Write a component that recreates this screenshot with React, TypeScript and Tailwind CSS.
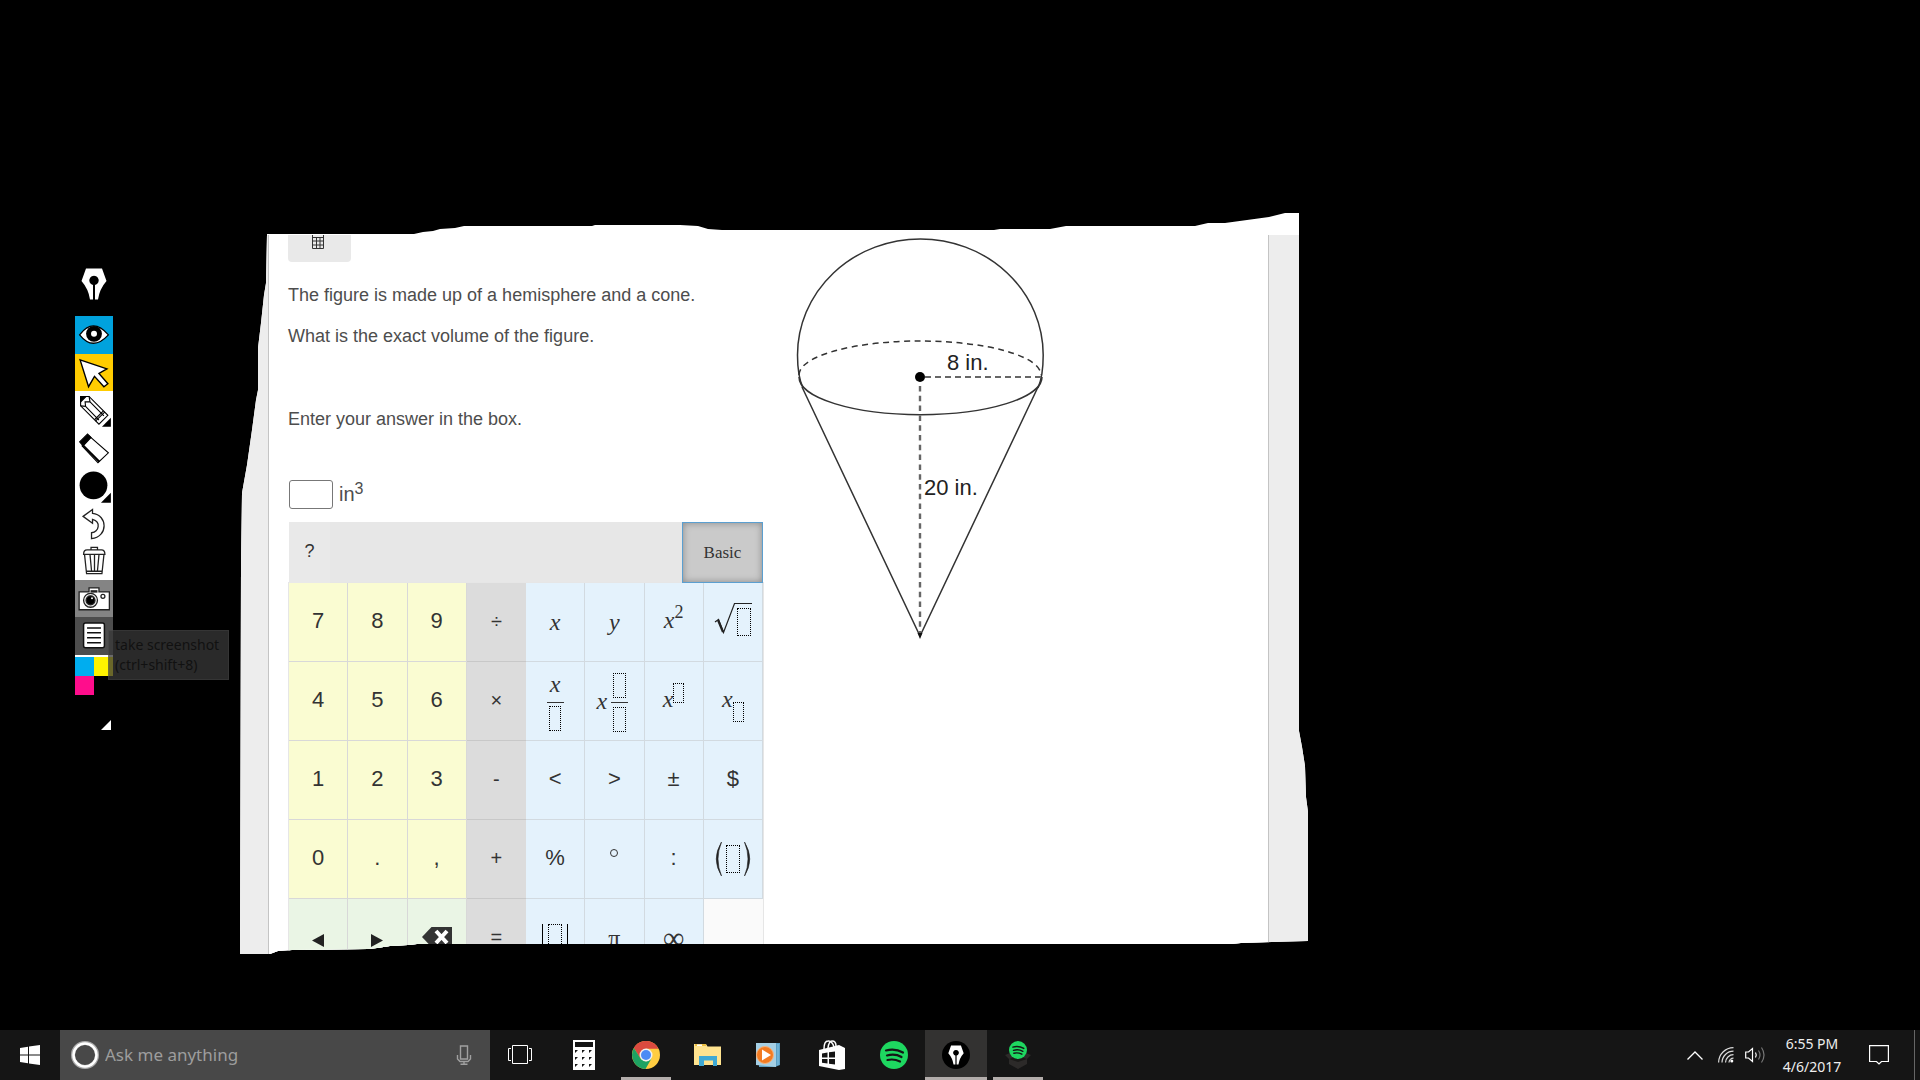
import React from "react";
import type { ReactNode } from "react";

const sans = "font-['Liberation_Sans',Arial,sans-serif]";
const uiFont = "font-['Noto_Sans','Open_Sans',sans-serif]";

/* ---------- Drawing toolbar ---------- */

function Nib({ className }: { className: string }) {
  return (
    <svg viewBox="0 0 26 32" className={className} aria-hidden="true">
      <path d="M5 0.5H21L25.5 13Q18.500 21 17 31.500H14V17A4.700 4.700 0 1 0 12 17V31.500H9Q7.500 21 0.500 13Z" fill="#fff" />
    </svg>
  );
}

const box = { width: 38, height: 38, viewBox: "0 0 38 38", className: "h-full w-full", "aria-hidden": true } as const;

const tools: { name: string; bg: string; icon: ReactNode }[] = [
  {
    name: "Show or hide ink",
    bg: "bg-[#00a2dd]",
    icon: (
      <svg {...box}>
        <path d="M4.500 19Q18 1 33.500 19Q18 36 4.500 19Z" fill="#fff" stroke="#000" strokeWidth="1.300" />
        <circle cx="19" cy="18" r="8" fill="#000" />
        <circle cx="19" cy="18" r="3" fill="#fff" />
      </svg>
    ),
  },
  {
    name: "Cursor",
    bg: "bg-[#ffcc00]",
    icon: (
      <svg {...box}>
        <path d="M5 6L32 15L24 19.500L33 30L29 33L19.500 22.500L13.500 33Z" fill="#fff" stroke="#000" strokeWidth="1.400" />
      </svg>
    ),
  },
  {
    name: "Pen",
    bg: "bg-white",
    icon: (
      <svg {...box} fill="none" stroke="#000" strokeWidth="1.100">
        <path d="M5.500 5.500H14L33 24.500L24 33.500L5.500 15Z" fill="#fff" />
        <path d="M5.500 5.500H11L5.500 11Z" fill="#000" />
        <path d="M14 5.500L15 11L10 11L10.500 15.500L5.500 15M15 11L29 25M10.500 15.500L24 29.500M30 21L20.500 30.500M28.500 20L19.500 29" />
        <path d="M36 27V36H27Z" fill="#000" stroke="none" />
      </svg>
    ),
  },
  {
    name: "Eraser",
    bg: "bg-white",
    icon: (
      <svg {...box} stroke="#000" strokeWidth="1.100">
        <path d="M14 7L33.500 24L23 34L7 17Z" fill="#fff" />
        <path d="M4.500 13L12.500 5L16 8.500L8 17Z" fill="#000" />
        <path d="M8 16.500L24.500 33" strokeWidth="2" />
      </svg>
    ),
  },
  {
    name: "Pen size",
    bg: "bg-white",
    icon: (
      <svg {...box}>
        <circle cx="18.500" cy="18.500" r="14" fill="#000" />
        <path d="M36 26V36H26Z" fill="#000" />
      </svg>
    ),
  },
  {
    name: "Undo",
    bg: "bg-white",
    icon: (
      <svg {...box}>
        <path d="M8 12.500L17.500 5.500V9.500C33 11 33.500 33 16.500 35V29C24 28 26.500 18 17.500 15.500V19.500Z" fill="#fff" stroke="#222" strokeWidth="1.300" />
      </svg>
    ),
  },
  {
    name: "Erase all",
    bg: "bg-white",
    icon: (
      <svg {...box} fill="none" stroke="#222" strokeWidth="1.300">
        <path d="M16 8V5.500H22.500V8M8.500 12.500Q8.500 8 12 8H26.500Q30 8 30 12.500ZM9.500 13L11.500 32H27L29 13M15 13L16.500 29M19.500 13V29M24 13L22.500 29M11.500 29.500H27" />
      </svg>
    ),
  },
  {
    name: "Take screenshot",
    bg: "bg-[#848484]",
    icon: (
      <svg {...box} stroke="#222" strokeWidth="1.300">
        <path d="M4 12H14V8H24V12H34.500V30H4Z" fill="#fff" />
        <path d="M15.500 11.500H22.500" strokeWidth="2.500" />
        <circle cx="15.500" cy="20.500" r="7" fill="#eee" />
        <circle cx="15.500" cy="20.500" r="4.500" fill="#000" />
        <circle cx="17" cy="18.500" r="1" fill="#fff" stroke="none" />
        <circle cx="28" cy="16.500" r="2" fill="#fff" />
      </svg>
    ),
  },
  {
    name: "Whiteboard",
    bg: "bg-[#4d4d4d]",
    icon: (
      <svg {...box} stroke="#111" strokeWidth="1.500">
        <rect x="8.500" y="6" width="21" height="25" rx="2" fill="#fff" />
        <path d="M12 11H26M12 16H26M12 21H26M12 26H26" />
      </svg>
    ),
  },
];

function Toolbar() {
  return (
    <aside className="relative ml-[75px] mt-[268px] w-[38px] shrink-0">
      <Nib className="mx-auto mb-4 h-8 w-[26px]" />
      <div className="flex h-[339px] flex-col">
        {tools.map((t) => (
          <button key={t.name} type="button" aria-label={t.name} className={`min-h-0 w-full flex-1 ${t.bg}`}>
            {t.icon}
          </button>
        ))}
      </div>
      <div className="grid grid-cols-2 border-t-2 border-white">
        <button type="button" aria-label="Cyan" className="h-[19px] bg-[#00adef]" />
        <button type="button" aria-label="Yellow" className="h-[19px] bg-[#fff200]" />
        <button type="button" aria-label="Magenta" className="h-[19px] bg-[#ff0d8c]" />
        <button type="button" aria-label="Black" className="h-[19px] bg-black" />
      </div>
      <svg viewBox="0 0 10 10" className="ml-[26px] mt-[25px] size-2.5" aria-hidden="true">
        <path d="M10 0V10H0Z" fill="#fff" />
      </svg>
      <div
        role="tooltip"
        className={`absolute left-[33px] top-[362px] w-[121px] border border-white/5 bg-[#383838]/75 px-1.5 py-1 text-sm leading-5 text-[#111] ${uiFont}`}
      >
        take screenshot (ctrl+shift+8)
      </div>
    </aside>
  );
}

/* ---------- Keypad ---------- */

function Slot({ className }: { className: string }) {
  return <span className={`inline-block border border-dotted border-black ${className}`} />;
}

const X = () => <i className="font-['Liberation_Serif',serif] text-2xl leading-6">x</i>;

type Key = { label: string; face?: ReactNode; tone: "num" | "op" | "math" | "nav" };

const tones = {
  num: "border-r border-b border-[#d8d8d8] bg-[#fafcd2] pb-1 text-[22px]",
  op: "border-b border-[#c8c8c8] bg-[#dcdcdc] pb-0.5 text-xl",
  math: "border-r border-b border-[#d2dae0] bg-[#e4f2fc] text-[22px]",
  nav: "border-r border-b border-[#d8d8d8] bg-[#eaf5e5] text-[22px]",
};

const num = (label: string): Key => ({ label, tone: "num" });
const op = (label: string): Key => ({ label, tone: "op" });
const math = (label: string, face?: ReactNode): Key => ({ label, face: face ?? <span className="pb-1">{label}</span>, tone: "math" });

const keys: Key[] = [
  num("7"), num("8"), num("9"), op("÷"),
  math("x", <X />),
  math("y", <i className="font-['Liberation_Serif',serif] text-2xl leading-6">y</i>),
  math("x squared", <span className="-mt-1 flex h-6"><X /><span className="-mt-1.5 font-['Liberation_Serif',serif] text-lg leading-5">2</span></span>),
  math(
    "square root",
    <span className="relative ml-5 flex">
      <svg viewBox="0 0 38 34" className="absolute -left-[21px] -top-1.5 h-[34px] w-[38px]" aria-hidden="true">
        <path d="M1 20L4.500 17.500L9.500 30.500L20.500 1.500H38" fill="none" stroke="#222" strokeWidth="1.200" />
        <path d="M4 18L9 30" stroke="#222" strokeWidth="2.200" />
      </svg>
      <Slot className="ml-0.5 h-7 w-3.5" />
    </span>,
  ),
  num("4"), num("5"), num("6"), op("×"),
  math("fraction of x", <span className="flex flex-col items-center pt-px"><X /><span className="mb-[3px] mt-1.5 h-px w-[17px] bg-[#333]" /><Slot className="h-[25px] w-3" /></span>),
  math(
    "mixed number",
    <span className="-ml-1 flex items-center gap-1">
      <X />
      <span className="flex flex-col items-center gap-1 pt-0.5"><Slot className="h-[25px] w-[13px]" /><span className="h-px w-[17px] bg-[#333]" /><Slot className="h-[25px] w-[13px]" /></span>
    </span>,
  ),
  math("x to a power", <span className="-mt-1 flex h-6"><X /><Slot className="-mt-1 h-5 w-[11px]" /></span>),
  math("x with subscript", <span className="-mt-1 flex h-6"><X /><Slot className="mt-[15px] h-5 w-[11px]" /></span>),
  num("1"), num("2"), num("3"), op("-"),
  math("<"), math(">"), math("±"), math("$"),
  num("0"), num("."), num(","), op("+"),
  math("%"),
  math("degree", <span className="mb-3 size-2 rounded-full border border-[#333]" />),
  math(":"),
  math(
    "parentheses",
    <span className="flex items-center gap-1">
      <svg viewBox="0 0 7 34" className="h-[34px] w-[7px]" aria-hidden="true"><path d="M6.500 0Q-4 17 6.500 34Q-0.500 17 6.500 0Z" fill="#222" stroke="#222" strokeWidth="0.600" /></svg>
      <Slot className="h-7 w-3.5" />
      <svg viewBox="0 0 7 34" className="h-[34px] w-[7px]" aria-hidden="true"><path d="M0.500 0Q11 17 0.500 34Q7.500 17 0.500 0Z" fill="#222" stroke="#222" strokeWidth="0.600" /></svg>
    </span>,
  ),
  { label: "left", tone: "nav", face: <svg viewBox="0 0 12 13" className="mt-1 h-[13px] w-3" aria-hidden="true"><path d="M12 0V13L0 6.500Z" fill="#222" /></svg> },
  { label: "right", tone: "nav", face: <svg viewBox="0 0 12 13" className="mt-1 h-[13px] w-3" aria-hidden="true"><path d="M0 0V13L12 6.500Z" fill="#222" /></svg> },
  {
    label: "backspace",
    tone: "nav",
    face: (
      <svg viewBox="0 0 30 20" className="mb-0.5 h-5 w-[30px]" aria-hidden="true">
        <path d="M9.500 0H30V20H9.500L0 10Z" fill="#333" />
        <path d="M14 4L25 16M25 4L14 16" stroke="#fff" strokeWidth="4" />
      </svg>
    ),
  },
  op("="),
  math("absolute value", <span className="flex gap-[5px]"><span className="w-px bg-black" /><Slot className="h-7 w-3.5" /><span className="w-px bg-black" /></span>),
  math("π", <span className="font-['Liberation_Serif',serif] text-2xl">π</span>),
  math("∞", <span className="font-['Liberation_Serif',serif] text-3xl">∞</span>),
];

function Keypad() {
  return (
    <section className="ml-px w-[474px] text-[#333]">
      <div className="flex h-[61px] bg-[#e7e7e7]">
        <button type="button" className="w-[41px] bg-[#e9e9e9] pb-1 text-lg">?</button>
        <button
          type="button"
          className="ml-auto w-[81px] border border-[#5b9fd0] bg-[#cacaca] font-['Liberation_Serif',serif] text-[17px] shadow-[inset_0_0_7px_#888]"
        >
          Basic
        </button>
      </div>
      <div className="grid auto-rows-[79px] grid-cols-8 bg-[#fafafa] shadow-[0_0_0_1px_#e6e6e6]">
        {keys.map((k) => (
          <button key={k.label} type="button" aria-label={k.label} className={`flex items-center justify-center overflow-hidden ${tones[k.tone]}`}>
            {k.face ?? k.label}
          </button>
        ))}
      </div>
    </section>
  );
}

/* ---------- Exercise sheet ---------- */

function Figure() {
  return (
    <svg viewBox="780 235 290 415" className="h-[415px] w-[290px] shrink-0" role="img" aria-label="Hemisphere on a cone">
      <g fill="none" stroke="#333" strokeWidth="1.500">
        <path d="M803 388Q797.500 376 797.500 355A122.800 116 0 0 1 1043.200 355Q1043.200 376 1038 388" />
        <path d="M799 377A121 37.500 0 0 0 1042 377" />
        <path d="M799 375A121 34 0 0 1 1041 375" strokeDasharray="6 4.500" />
        <path d="M802 387L920 636L1038 387" />
      </g>
      <path d="M925 377H1041" stroke="#666" strokeWidth="2" strokeDasharray="6 4" />
      <path d="M920 386V634" stroke="#666" strokeWidth="2.400" strokeDasharray="5.500 4.300" />
      <circle cx="920" cy="377" r="5" fill="#000" />
      <path d="M917.500 633H922.500L920 639Z" fill="#111" />
      <g fill="#222" fontFamily="'Liberation Sans', Arial, sans-serif" fontSize="22">
        <text x="947" y="370">8 in.</text>
        <text x="924" y="495">20 in.</text>
      </g>
    </svg>
  );
}

function Sheet() {
  return (
    <article
      className={`ml-[127px] mt-[213px] w-[1069px] bg-white pt-[22px] text-lg leading-[41px] text-[#4d4d4d] [clip-path:polygon(27px_21px,174px_21px,183px_19px,193px_18px,200px_16px,215px_15px,224px_13px,352px_13px,355px_12px,440px_12px,458px_13px,468px_16px,482px_17px,754px_17px,760px_16px,810px_16px,826px_13px,955px_13px,968px_10px,985px_10px,1029px_4px,1045px_0px,1059px_0px,1059px_518px,1062px_534px,1065px_553px,1066px_584px,1068px_599px,1068px_728px,1033px_729px,1001px_730px,992px_731px,177px_731px,168px_732px,150px_733px,137px_735px,128px_736px,52px_737px,38px_738px,30px_741px,0px_741px,1px_350px,2px_280px,7px_252px,12px_217px,16px_187px,18px_177px,18px_135px,21px_110px,24px_82px,26px_70px)] ${sans}`}
    >
      <div className="bg-[#ededed] pl-7 pr-10">
        <div className="flex border-x border-[#c4c4c4] bg-white pl-[19px]">
          <div className="w-[492px] shrink-0">
            <button type="button" aria-label="Calculator" className="flex h-[27px] w-[63px] justify-center rounded-b-sm bg-[#e9e9e9]">
              <svg viewBox="0 0 12 14" className="-ml-1 h-3.5 w-3" aria-hidden="true">
                <path d="M0.500 0V13.500H11.500V0M0.500 2.500H11.500M0.500 6H11.500M0.500 10H11.500M4.500 2.500V13M8 2.500V13" fill="none" stroke="#333" />
              </svg>
            </button>
            <p className="pt-[13px]">The figure is made up of a hemisphere and a cone.</p>
            <p>What is the exact volume of the figure.</p>
            <p className="pt-[42px]">Enter your answer in the box.</p>
            <label className="ml-px flex pb-[13px] pt-10 text-xl leading-[29px]">
              <input type="text" className="mr-1.5 h-[29px] w-11 rounded-[3px] border border-[#777] bg-white" />
              in<span className="-mt-1.5 text-base leading-[29px]">3</span>
            </label>
            <Keypad />
          </div>
          <Figure />
        </div>
      </div>
    </article>
  );
}

/* ---------- Taskbar ---------- */

function Spotify({ className }: { className: string }) {
  return (
    <svg viewBox="0 0 28 28" className={className} aria-hidden="true">
      <circle cx="14" cy="14" r="14" fill="#1ed760" />
      <path d="M6 9.500Q15 7 23 11.500M7 14.500Q15 12.300 21.500 16M7.500 19Q14 17.500 20 20.500" stroke="#151515" strokeWidth="2.200" fill="none" strokeLinecap="round" />
    </svg>
  );
}

const apps: { name: string; icon: ReactNode; running?: boolean; active?: boolean }[] = [
  {
    name: "Task view",
    icon: (
      <svg viewBox="0 0 24 20" className="mr-1 h-5 w-6" fill="none" stroke="#fff" aria-hidden="true">
        <path d="M4.500 0.500H19.500V18.500H4.500ZM3 3.500H0.500V15.500H3M21 3.500H23.500V15.500H21" />
      </svg>
    ),
  },
  {
    name: "Calculator",
    icon: (
      <svg viewBox="0 0 22 30" className="h-[30px] w-[22px]" aria-hidden="true">
        <path d="M0 0H22V30H0Z" fill="#fff" />
        <path d="M2 2H20V7H2ZM2 10H5L2 13ZM9 10H12L9 13ZM16 10H19L16 13ZM2 17H5L2 20ZM9 17H12L9 20ZM16 17H19L16 20ZM2 24H5L2 27ZM9 24H12L9 27ZM16 24H19L16 27Z" fill="#151515" />
      </svg>
    ),
  },
  {
    name: "Google Chrome",
    running: true,
    icon: (
      <svg viewBox="0 0 28 28" className="size-7" aria-hidden="true">
        <circle cx="14" cy="14" r="14" fill="#ffcd41" />
        <path d="M14 14L1.900 7A14 14 0 0 1 26.100 7.500H14Z" fill="#db4a3f" />
        <path d="M14 7.500H26.300A14 14 0 0 0 1.900 7L8.300 17.500Z" fill="#db4a3f" />
        <path d="M1.900 7A14 14 0 0 0 13.500 28L19.500 17.500L14 20.500L8.500 17.500Z" fill="#1da362" />
        <circle cx="14" cy="14" r="6.500" fill="#f1f1f1" />
        <circle cx="14" cy="14" r="5" fill="#4c8bf5" />
      </svg>
    ),
  },
  {
    name: "File Explorer",
    icon: (
      <svg viewBox="0 0 28 24" className="h-6 w-7" aria-hidden="true">
        <path d="M0 1H12L13.500 3.500H27V22H0Z" fill="#ffe38f" />
        <path d="M1 1H12V3H1Z" fill="#e9bd42" />
        <path d="M3 1.500H8V3H3Z" fill="#fff" />
        <path d="M5 13H23V23H19V17.500H10V23H5Z" fill="#3fa9d4" />
      </svg>
    ),
  },
  {
    name: "Media Player",
    icon: (
      <svg viewBox="0 0 26 26" className="mr-1 size-[26px]" aria-hidden="true">
        <path d="M4 1H25V23L20 25H4Z" fill="#5b9fc4" />
        <path d="M1 1H21V25L1 23Z" fill="#a5cfe4" />
        <path d="M23 2V23" stroke="#82c4e8" />
        <circle cx="10" cy="13" r="8.500" fill="#f27b22" stroke="#f7b27b" />
        <path d="M7 7.500L16 13L7 18.500Z" fill="#fff" />
      </svg>
    ),
  },
  {
    name: "Store",
    icon: (
      <svg viewBox="0 0 26 30" className="h-[30px] w-[26px]" aria-hidden="true">
        <path d="M5 9Q5 1 9 1Q13 0.500 15 7M9 8Q10 1 13 1Q17 1 17 6" fill="none" stroke="#fff" strokeWidth="1.500" />
        <path d="M0 10L20 5L26 8V29L20 30L0 26Z" fill="#fff" />
        <path d="M3 13.500L8.500 12.500V17.500H3ZM10 12.300L16 11.500V17.500H10ZM3 19H8.500V23.500L3 22.700ZM10 19H16V24.500L10 23.700Z" fill="#151515" />
      </svg>
    ),
  },
  { name: "Spotify", icon: <Spotify className="size-7" /> },
  {
    name: "Epic Pen",
    running: true,
    active: true,
    icon: (
      <span className="flex size-7 items-center justify-center rounded-full bg-black">
        <Nib className="h-5 w-4" />
      </span>
    ),
  },
  {
    name: "Spotify installer",
    running: true,
    icon: (
      <span className="relative flex h-7 w-[26px] justify-center">
        <svg viewBox="0 0 26 28" className="absolute inset-0 h-7 w-[26px]" aria-hidden="true">
          <path d="M0 14L13 9L26 14L22 18V23L13 28L4 23V18Z" fill="#2c2a29" />
          <path d="M4 18L13 15L22 18L13 21Z" fill="#1b1a19" />
        </svg>
        <Spotify className="relative size-[18px]" />
      </span>
    ),
  },
];

function Taskbar() {
  return (
    <footer className={`flex h-[50px] shrink-0 bg-[#151515] text-white ${uiFont}`}>
      <button type="button" aria-label="Start" className="flex w-[60px] items-center justify-center">
        <svg viewBox="0 0 20 20" className="size-5" fill="#fff" aria-hidden="true">
          <path d="M0 3L8 1.800V9.500H0ZM9 1.600L20 0V9.500H9ZM0 10.500H8V18.200L0 17ZM9 10.500H20V20L9 18.400Z" />
        </svg>
      </button>
      <label className="flex w-[430px] items-center bg-[#484848] pl-[11px] pr-[18px]">
        <svg viewBox="0 0 28 28" className="size-7" aria-hidden="true">
          <circle cx="14" cy="14" r="12" fill="none" stroke="#aaa" strokeWidth="4" />
          <circle cx="14" cy="14" r="11.500" fill="none" stroke="#fff" strokeWidth="2.500" />
        </svg>
        <input type="text" aria-label="Search" placeholder="Ask me anything" className="ml-1.5 min-w-0 flex-1 bg-transparent text-[17px] placeholder:text-[#9d9d9d]" />
        <svg viewBox="0 0 16 20" className="h-5 w-4" fill="none" stroke="#a0a0a0" strokeWidth="1.400" aria-hidden="true">
          <path d="M4.500 1H11.500V14H4.500ZM1.500 10V14L4 16.500H12L14.500 14V10M8 16.500V19.300M4.500 19.300H11.500" />
        </svg>
      </label>
      <nav className="ml-px flex" aria-label="Applications">
        {apps.map((a) => (
          <button
            key={a.name}
            type="button"
            aria-label={a.name}
            className={`relative flex w-[62px] items-center justify-center ${a.active ? "bg-[#333231]" : ""}`}
          >
            {a.icon}
            {a.running && <span className={`absolute bottom-0 h-[3px] bg-[#b3adab] ${a.active ? "inset-x-0" : "inset-x-1.5"}`} />}
          </button>
        ))}
      </nav>
      <div className="ml-auto flex items-center">
        <svg viewBox="0 0 16 9" className="h-[9px] w-4" fill="none" stroke="#fff" strokeWidth="1.300" aria-hidden="true">
          <path d="M0.500 8.500L8 1L15.500 8.500" />
        </svg>
        <svg viewBox="0 0 16 16" className="ml-[15px] size-4" fill="none" stroke="#ddd" strokeWidth="1.200" aria-hidden="true">
          <path d="M0.600 15.500A15 15 0 0 1 15.500 0.600M4 15.500A11.500 11.500 0 0 1 15.500 4.200M7.500 15.500A8 8 0 0 1 15.500 7.700M11 15.500A4.500 4.500 0 0 1 15.500 11.200" />
          <circle cx="13.800" cy="14" r="1.500" fill="#fff" stroke="none" />
        </svg>
        <svg viewBox="0 0 21 18" className="ml-[11px] h-[18px] w-[21px]" fill="none" strokeWidth="1.200" aria-hidden="true">
          <path d="M0.700 6H3.500L7.500 2.500V15.500L3.500 12H0.700ZM10.500 6.500Q12 9 10.500 11.500" stroke="#fff" />
          <path d="M13.500 4.500Q16.500 9 13.500 13.500M16.500 1.500Q21.500 9 16.500 16.500" stroke="#777" />
        </svg>
        <div className="ml-[11px] w-[70px] text-center text-sm leading-[23px] text-[#eee]">
          <div>6:55 PM</div>
          <div>4/6/2017</div>
        </div>
        <button type="button" aria-label="Notifications" className="ml-[22px]">
          <svg viewBox="0 0 20 20" className="size-5" fill="none" stroke="#fff" strokeWidth="1.200" aria-hidden="true">
            <path d="M0.600 0.600H19.400V16.500H12.500L10 19L7.500 16.500H0.600Z" />
          </svg>
        </button>
        <button type="button" aria-label="Show desktop" className="ml-[25px] w-1.5 self-stretch border-l border-[#666]" />
      </div>
    </footer>
  );
}

export default function App() {
  return (
    <div className="flex min-h-screen flex-col bg-black">
      <main className="flex flex-1 items-start">
        <Toolbar />
        <Sheet />
      </main>
      <Taskbar />
    </div>
  );
}
